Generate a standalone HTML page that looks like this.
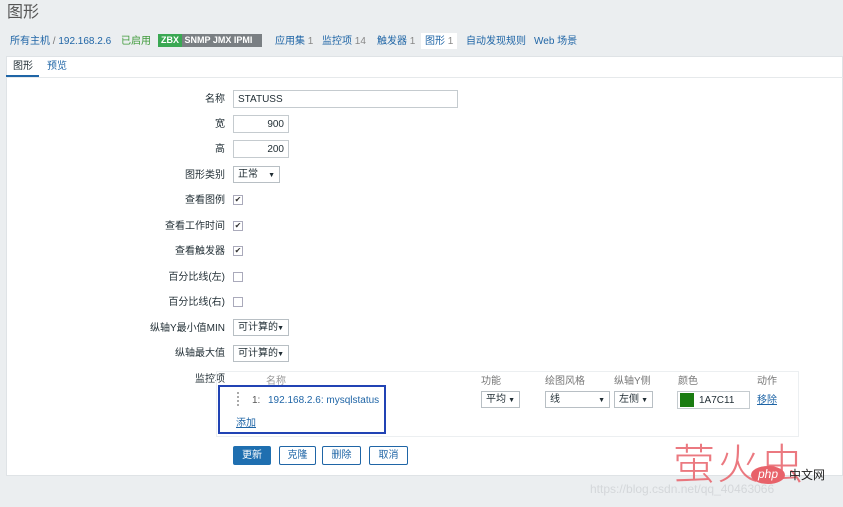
<!DOCTYPE html>
<html><head><meta charset="utf-8"><style>
*{box-sizing:border-box;margin:0;padding:0}
body{width:843px;height:507px;overflow:hidden;background:#ebeef0;font-family:"Liberation Sans","Noto Sans CJK SC",sans-serif;font-size:10px;line-height:12px;color:#1f2c33;position:relative}
.a{position:absolute}
.lnk{color:#1f65a6}
.lbl{position:absolute;right:618px;text-align:right;font-size:10px;white-space:nowrap}
.in{position:absolute;border:1px solid #c5cbcf;background:#fff;height:18px;font-size:10px;padding:2px 4px;line-height:13px}
.cb{position:absolute;left:233px;width:10px;height:10px;border:1px solid #aab;background:#fff;font-size:8px;line-height:8px;text-align:center;color:#333}
.sel{position:absolute;border:1px solid #b8bfc4;background:#fff;height:17px;font-size:10px;padding:2px 4px;line-height:12px}
.sel:after{content:"▼";position:absolute;right:4px;top:3px;font-size:7px}
.btn{position:absolute;top:446px;height:19px;border:1px solid #1f65a6;color:#1f65a6;background:#fff;font-size:10px;line-height:17px;text-align:center;border-radius:2px}
</style></head><body>
<div class="a" style="left:7px;top:4px;font-size:16px;line-height:18px;color:#555">图形</div>
<div class="a lnk" style="left:10px;top:36px">所有主机 <span style="color:#777">/</span> 192.168.2.6</div>
<div class="a" style="left:121px;top:36px;color:#3f9a3a">已启用</div>
<div class="a" style="left:158px;top:34px;height:13px;width:104px;background:#7a7f83;color:#fff;font-weight:bold;font-size:9px;line-height:13px;white-space:nowrap;overflow:hidden"><span style="background:#3aa853;padding:0 3px;display:inline-block">ZBX</span> SNMP JMX IPMI</div>
<div class="a lnk" style="left:275px;top:36px">应用集 <span style="color:#888">1</span></div>
<div class="a lnk" style="left:322px;top:36px">监控项 <span style="color:#888">14</span></div>
<div class="a lnk" style="left:377px;top:36px">触发器 <span style="color:#888">1</span></div>
<div class="a" style="left:421px;top:33px;width:36px;height:16px;background:#fff"></div>
<div class="a lnk" style="left:425px;top:36px">图形 <span style="color:#888">1</span></div>
<div class="a lnk" style="left:466px;top:36px">自动发现规则</div>
<div class="a lnk" style="left:534px;top:36px">Web 场景</div>
<div class="a" style="left:6px;top:56px;width:837px;height:420px;background:#fff;border:1px solid #dfe3e6"></div>
<div class="a" style="left:6px;top:77px;width:837px;height:1px;background:#e6e9eb"></div>
<div class="a" style="left:13px;top:61px">图形</div>
<div class="a" style="left:6px;top:75px;width:33px;height:2px;background:#1f65a6"></div>
<div class="a lnk" style="left:47px;top:61px">预览</div>

<div class="lbl" style="top:94px">名称</div><div class="in" style="left:233px;top:90px;width:225px">STATUSS</div>
<div class="lbl" style="top:119px">宽</div><div class="in" style="left:233px;top:115px;width:56px;text-align:right">900</div>
<div class="lbl" style="top:144px">高</div><div class="in" style="left:233px;top:140px;width:56px;text-align:right">200</div>
<div class="lbl" style="top:170px">图形类别</div><div class="sel" style="left:233px;top:166px;width:47px">正常</div>
<div class="lbl" style="top:195px">查看图例</div><div class="cb" style="top:195px">✔</div>
<div class="lbl" style="top:221px">查看工作时间</div><div class="cb" style="top:221px">✔</div>
<div class="lbl" style="top:246px">查看触发器</div><div class="cb" style="top:246px">✔</div>
<div class="lbl" style="top:272px">百分比线(左)</div><div class="cb" style="top:272px"></div>
<div class="lbl" style="top:297px">百分比线(右)</div><div class="cb" style="top:297px"></div>
<div class="lbl" style="top:323px">纵轴Y最小值MIN</div><div class="sel" style="left:233px;top:319px;width:56px">可计算的</div>
<div class="lbl" style="top:348px">纵轴最大值</div><div class="sel" style="left:233px;top:345px;width:56px">可计算的</div>
<div class="lbl" style="top:374px">监控项</div>
<div class="a" style="left:216px;top:371px;width:583px;height:66px;border:1px solid #eceff1"></div>
<div class="a" style="left:266px;top:376px;color:#999">名称</div>
<div class="a" style="left:481px;top:376px;color:#777">功能</div>
<div class="a" style="left:545px;top:376px;color:#777">绘图风格</div>
<div class="a" style="left:614px;top:376px;color:#777">纵轴Y侧</div>
<div class="a" style="left:678px;top:376px;color:#777">颜色</div>
<div class="a" style="left:757px;top:376px;color:#777">动作</div>
<div class="a" style="left:218px;top:385px;width:168px;height:49px;border:2px solid #2143b4"></div>
<div class="a" style="left:237px;top:392px;width:2px;height:14px;border-left:2px dotted #aaa"></div>
<div class="a" style="left:252px;top:395px;color:#555">1:</div>
<div class="a lnk" style="left:268px;top:395px">192.168.2.6: mysqlstatus</div>
<div class="a lnk" style="left:236px;top:418px;text-decoration:underline">添加</div>
<div class="sel" style="left:481px;top:391px;width:39px">平均</div>
<div class="sel" style="left:545px;top:391px;width:65px">线</div>
<div class="sel" style="left:614px;top:391px;width:39px">左侧</div>
<div class="in" style="left:677px;top:391px;width:73px;padding-left:21px">1A7C11</div>
<div class="a" style="left:680px;top:393px;width:14px;height:14px;background:#1a7c11"></div>
<div class="a lnk" style="left:757px;top:395px;text-decoration:underline">移除</div>
<div class="btn" style="left:233px;width:38px;background:#1f6fb0;color:#fff;border-color:#1f6fb0">更新</div>
<div class="btn" style="left:279px;width:37px">克隆</div>
<div class="btn" style="left:322px;width:39px">删除</div>
<div class="btn" style="left:369px;width:39px">取消</div>
<div class="a" style="left:673px;top:438px;font-size:42px;line-height:48px;color:#e8626a;font-family:'Noto Sans CJK SC',sans-serif;font-weight:300;letter-spacing:2px;opacity:.85">萤火虫</div>
<div class="a" style="left:751px;top:466px;width:34px;height:18px;border-radius:50%;background:#e8626a;color:#fff;font-size:12px;text-align:center;line-height:17px;font-style:italic">php</div>
<div class="a" style="left:789px;top:468px;font-size:12px;line-height:14px;color:#222">中文网</div>
<div class="a" style="left:590px;top:482px;font-size:12px;line-height:14px;color:#d4d7da">https://blog.csdn.net/qq_40463066</div>
</body></html>
